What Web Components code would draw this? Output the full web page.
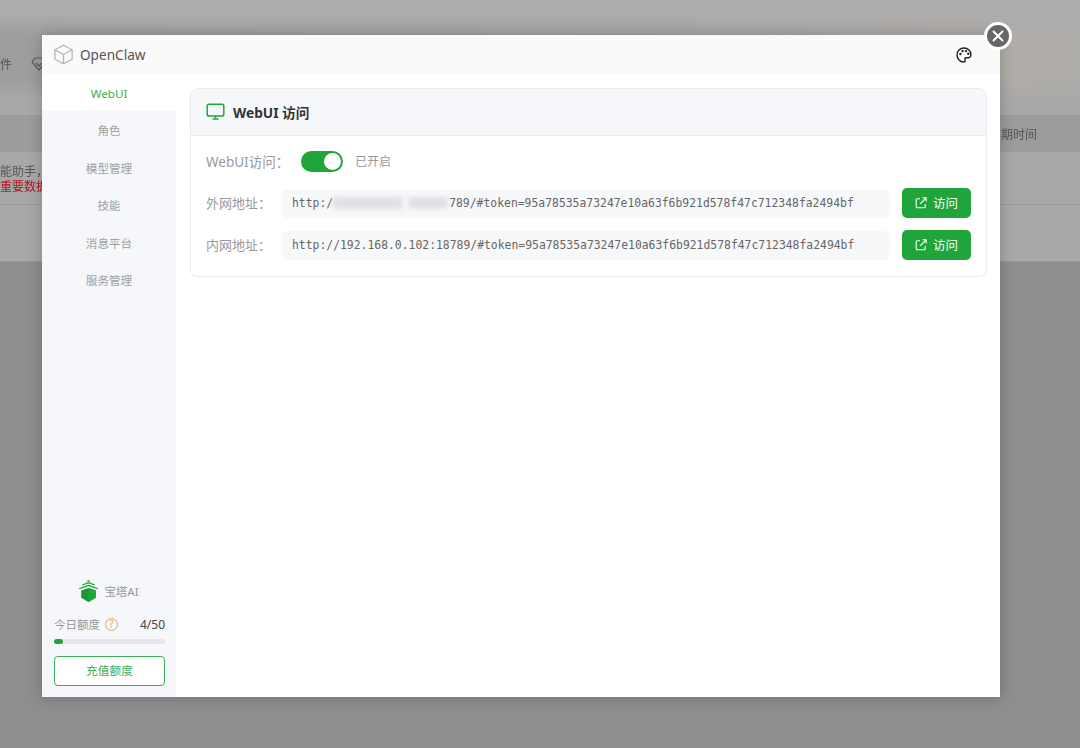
<!DOCTYPE html>
<html lang="zh">
<head>
<meta charset="utf-8">
<title>OpenClaw</title>
<style>
    html, body {
        margin: 0;
        height: 100%;
        overflow: hidden;
        font-family: "Noto Sans", "Noto Sans CJK SC", sans-serif;
    }
</style>
</head>
<body>
<bt-backdrop></bt-backdrop>
<bt-dialog>
    <bt-nav-item active>WebUI</bt-nav-item>
    <bt-nav-item>角色</bt-nav-item>
    <bt-nav-item>模型管理</bt-nav-item>
    <bt-nav-item>技能</bt-nav-item>
    <bt-nav-item>消息平台</bt-nav-item>
    <bt-nav-item>服务管理</bt-nav-item>
    <bt-quota slot="footer" used="4" total="50"></bt-quota>

    <bt-card slot="content" title="WebUI 访问">
        <bt-switch-row label="WebUI访问：" state="已开启"></bt-switch-row>
        <bt-addr-row label="外网地址：" masked head="http:/" tail="789/#token=95a78535a73247e10a63f6b921d578f47c712348fa2494bf"></bt-addr-row>
        <bt-addr-row label="内网地址：" head="http://192.168.0.102:18789/#token=95a78535a73247e10a63f6b921d578f47c712348fa2494bf"></bt-addr-row>
    </bt-card>
</bt-dialog>

<script>
const CJK = `"Noto Sans", "Noto Sans CJK SC", sans-serif`;

// the page behind the dialog, greyed out by the mask
class BtBackdrop extends HTMLElement {
    constructor() {
        super();
        this.attachShadow({mode: 'open'});
        this.shadowRoot.innerHTML = `
<style>
    :host {
        display: flex;
        flex-direction: column;
        height: 748px;
        overflow: hidden;
        background: #8e8e8e;
        font: 12px ${CJK};
        color: #555;
        filter: blur(0.6px);
    }
    .top {
        height: 115px;
        box-sizing: border-box;
        padding-top: 55px;
        display: flex;
        align-items: flex-start;
        gap: 19px;
        background:
            linear-gradient(180deg, #acacac 0, #acacac 14px, rgba(172, 172, 172, 0) 36px),
            linear-gradient(180deg, rgba(168, 168, 168, 0) 78px, #a8a8a8 100px),
            linear-gradient(90deg, #9f9d9b 0%, #a6a4a2 60%, #b2ada9 90%, #aeaca9 100%);
    }
    .top svg { margin-top: 2px; }
    .head {
        height: 37px;
        background: #9c9c9c;
        display: flex;
        justify-content: flex-end;
        align-items: center;
        padding-right: 43px;
    }
    .row {
        height: 53px;
        background: #a8a8a8;
        border-bottom: 1px solid #9a9a9a;
        padding-top: 12px;
        box-sizing: border-box;
        line-height: 15px;
    }
    .row .red { color: #b3141d; }
    .foot {
        height: 56px;
        background: #a8a8a8;
        border-bottom: 1px solid #999;
    }
</style>
<div class="top">
    <span>件</span>
    <svg width="16" height="14" viewBox="0 0 16 14" fill="none" stroke="#5f5a55" stroke-width="1.2">
        <path d="M4 1h8l3 4-7 8-7-8z"/><path d="M5 6l3 3 3-3"/>
    </svg>
</div>
<div class="head"><span>到期时间</span></div>
<div class="row">
    <div>能助手，</div>
    <div class="red">重要数据</div>
</div>
<div class="foot"></div>`;
    }
}

// dialog frame: header, left menu, content, close button
class BtDialog extends HTMLElement {
    constructor() {
        super();
        this.attachShadow({mode: 'open'});
        this.shadowRoot.innerHTML = `
<style>
    :host {
        position: absolute;
        left: 42px;
        top: 35px;
        width: 958px;
        height: 662px;
        display: flex;
        flex-direction: column;
        background: #fff;
        box-shadow: 0 0 14px rgba(0, 0, 0, .22);
        font-family: ${CJK};
    }
    header {
        height: 39px;
        flex: none;
        display: flex;
        align-items: center;
        padding: 0 28px 0 11px;
        background: #fafafa;
        color: #555;
        font-size: 13.6px;
    }
    header .name { margin-left: 6px; flex: 1; }
    .body { flex: 1; display: flex; min-height: 0; }
    aside {
        width: 134px;
        flex: none;
        display: flex;
        flex-direction: column;
        background: #f5f7fa;
    }
    .foot { margin-top: auto; }
    main { flex: 1; padding: 14px 13px 14px 14px; }
    .close {
        position: absolute;
        right: -12px;
        top: -13px;
        width: 28px;
        height: 28px;
        box-sizing: border-box;
        border: 3px solid #fff;
        border-radius: 50%;
        background: #666;
        display: flex;
        align-items: center;
        justify-content: center;
    }
</style>
<header>
    <svg width="21" height="21" viewBox="0 0 21 21" fill="none" stroke="#b5b5b5" stroke-width="1.3" stroke-linejoin="round">
        <path d="M10.5 1.2l8.6 4.6v9.4l-8.6 4.6-8.6-4.6V5.8z"/>
        <path d="M1.9 5.8l8.6 4.7 8.6-4.7M10.5 10.5v9.3"/>
    </svg>
    <span class="name">OpenClaw</span>
    <svg width="16" height="16" viewBox="0 0 16 16">
        <path d="M8 1C4 1 1 4 1 8s3 7 6.6 7c1.3 0 1.7-.8 1.4-1.7-.4-1-.3-2.3 1-2.5 1.2-.2 2.2.2 3.1-.2 1.3-.6 1.9-1.7 1.9-3C15 3.9 12 1 8 1z" fill="#fff" stroke="#222" stroke-width="1.4"/>
        <circle cx="4.4" cy="7" r="1.2" fill="#222"/>
        <circle cx="6.6" cy="4.1" r="1.2" fill="#222"/>
        <circle cx="10" cy="4.1" r="1.2" fill="#222"/>
        <circle cx="12.3" cy="6.8" r="1.2" fill="#222"/>
    </svg>
</header>
<div class="body">
    <aside>
        <slot></slot>
        <div class="foot"><slot name="footer"></slot></div>
    </aside>
    <main><slot name="content"></slot></main>
</div>
<div class="close">
    <svg width="12" height="12" viewBox="0 0 12 12" stroke="#fff" stroke-width="2" stroke-linecap="round">
        <path d="M1.5 1.5l9 9M10.5 1.5l-9 9"/>
    </svg>
</div>`;
    }
}

class BtNavItem extends HTMLElement {
    constructor() {
        super();
        this.attachShadow({mode: 'open'});
        this.shadowRoot.innerHTML = `
<style>
    :host {
        display: block;
        height: 37.4px;
        line-height: 39.5px;
        text-align: center;
        font-size: 11.6px;
        color: #a0a0a0;
    }
    :host([active]) {
        background: #fff;
        color: #3cae55;
    }
</style>
<slot></slot>`;
    }
}

// sidebar bottom block with logo, quota bar and recharge button
class BtQuota extends HTMLElement {
    constructor() {
        super();
        this.attachShadow({mode: 'open'});
        this.shadowRoot.innerHTML = `
<style>
    :host {
        display: flex;
        flex-direction: column;
        padding: 0 11px 11px 12px;
        font-size: 11.5px;
        color: #999;
    }
    .logo {
        display: flex;
        align-items: center;
        justify-content: center;
        gap: 6px;
        height: 22px;
        font-size: 11.5px;
        padding-right: 1px;
    }
    .line {
        display: flex;
        align-items: center;
        margin-top: 14px;
        height: 16px;
    }
    .tip {
        width: 11px;
        height: 11px;
        margin-left: 5px;
        border: 1px solid #e9a55c;
        border-radius: 50%;
        color: #e9a55c;
        font-size: 10px;
        line-height: 11px;
        text-align: center;
    }
    .num { margin-left: auto; color: #444; font-size: 12px; }
    .track {
        height: 5px;
        margin-top: 7px;
        border-radius: 3px;
        background: #e4e6e9;
    }
    .fill {
        height: 100%;
        border-radius: 3px;
        background: #20a53a;
    }
    .btn {
        height: 30px;
        margin-top: 12px;
        box-sizing: border-box;
        border: 1px solid #3cae55;
        border-radius: 4px;
        background: #fff;
        color: #3cae55;
        font-size: 11.7px;
        line-height: 26px;
        text-align: center;
    }
</style>
<div class="logo">
    <svg width="19" height="22" viewBox="0 0 19 22">
        <path d="M9.5 0l2.2 1.4H7.3z" fill="#20a53a"/>
        <path d="M9.5 2L16 4.4v1.2L9.5 3.400 3 5.600V4.400z" fill="#20a53a"/>
        <path d="M9.5 4.800L18.800 8v1.300L9.500 6.300.2 9.300V8z" fill="#20a53a"/>
        <path d="M2.200 10.500L9.500 8l7.300 2.500v7.200L9.500 22l-7.300-4.300z" fill="#1b9634"/>
        <path d="M9.500 8l7.300 2.500v7.200L9.500 22z" fill="#20a53a"/>
    </svg>
    <span>宝塔AI</span>
</div>
<div class="line">
    <span>今日额度</span><span class="tip">?</span>
    <span class="num" id="num"></span>
</div>
<div class="track"><div class="fill" id="fill"></div></div>
<div class="btn">充值额度</div>`;
    }

    connectedCallback() {
        const used = Number(this.getAttribute('used'));
        const total = Number(this.getAttribute('total'));
        this.shadowRoot.getElementById('num').textContent = used + '/' + total;
        this.shadowRoot.getElementById('fill').style.width = (used / total * 100) + '%';
    }
}

class BtCard extends HTMLElement {
    constructor() {
        super();
        this.attachShadow({mode: 'open'});
        this.shadowRoot.innerHTML = `
<style>
    :host {
        display: block;
        box-sizing: border-box;
        border: 1px solid #e8eaee;
        border-radius: 8px;
        overflow: hidden;
        background: #fff;
    }
    .head {
        height: 46px;
        display: flex;
        align-items: center;
        gap: 8px;
        padding-left: 15px;
        background: #f5f7fa;
        border-bottom: 1px solid #e8eaee;
        color: #333;
        font-size: 13.7px;
        font-weight: 700;
    }
    .list {
        display: flex;
        flex-direction: column;
        gap: 12px;
        padding: 15px 15px 16px;
    }
</style>
<div class="head">
    <svg width="19" height="18" viewBox="0 0 19 18" fill="none" stroke="#20a53a" stroke-width="1.5">
        <rect x="1.2" y="1.2" width="16.6" height="11.8" rx="1.8"/>
        <path d="M9.5 13v2.5" />
        <path d="M6.5 16h6" stroke-width="1.6"/>
    </svg>
    <span id="title"></span>
</div>
<div class="list"><slot></slot></div>`;
    }

    connectedCallback() {
        this.shadowRoot.getElementById('title').textContent = this.getAttribute('title');
    }
}

class BtSwitchRow extends HTMLElement {
    constructor() {
        super();
        this.attachShadow({mode: 'open'});
        this.shadowRoot.innerHTML = `
<style>
    :host {
        display: flex;
        align-items: center;
        height: 21px;
        margin-bottom: 4px;
        font-size: 13px;
        color: #999;
    }
    .label { width: 95px; font-size: 13.5px; white-space: nowrap; padding-bottom: 2px; }
    .switch {
        width: 42px;
        height: 21px;
        box-sizing: border-box;
        padding: 2px 2px 2px 23px;
        border-radius: 11px;
        background: #20a53a;
    }
    .knob {
        width: 17px;
        height: 17px;
        border-radius: 50%;
        background: #fff;
    }
    .state { margin-left: 12px; font-size: 12px; padding-bottom: 2px; }
</style>
<span class="label" id="label"></span>
<div class="switch"><div class="knob"></div></div>
<span class="state" id="state"></span>`;
    }

    connectedCallback() {
        this.shadowRoot.getElementById('label').textContent = this.getAttribute('label');
        this.shadowRoot.getElementById('state').textContent = this.getAttribute('state');
    }
}

class BtAddrRow extends HTMLElement {
    constructor() {
        super();
        this.attachShadow({mode: 'open'});
        this.shadowRoot.innerHTML = `
<style>
    :host {
        display: flex;
        align-items: center;
        gap: 12px;
        height: 30px;
        font-size: 13px;
        color: #999;
    }
    .label { width: 63px; white-space: nowrap; padding-bottom: 2px; }
    .field {
        flex: 1;
        height: 29px;
        box-sizing: border-box;
        padding-left: 11px;
        display: flex;
        align-items: center;
        border-radius: 6px;
        background: #f7f8fa;
        font: 11.4px "DejaVu Sans Mono", monospace;
        color: #666;
        white-space: pre;
    }
    .mask {
        display: none;
        width: 116px;
        height: 12px;
        gap: 5px;
        filter: blur(2px);
    }
    :host([masked]) .mask { display: flex; }
    .mask i { display: block; background: #dfe1e4; }
    .mask i:first-child { width: 70px; }
    .mask i:last-child { width: 40px; }
    .go {
        width: 69px;
        height: 30px;
        display: flex;
        align-items: center;
        justify-content: center;
        gap: 6px;
        border-radius: 5px;
        background: #20a53a;
        color: #fff;
        font-size: 12.5px;
    }
    .go span { padding-bottom: 2px; }
</style>
<span class="label" id="label"></span>
<div class="field"><span id="head"></span><span class="mask"><i></i><i></i></span><span id="tail"></span></div>
<div class="go">
    <svg width="12" height="12" viewBox="0 0 12 12" fill="none" stroke="#fff" stroke-width="1.1">
        <path d="M5 1.8H2.2a1 1 0 0 0-1 1v7a1 1 0 0 0 1 1h7a1 1 0 0 0 1-1V7"/>
        <path d="M5.2 6.8L11 1M7.5 .8H11.2V4.5"/>
    </svg>
    <span>访问</span>
</div>`;
    }

    connectedCallback() {
        for (const id of ['label', 'head', 'tail']) {
            this.shadowRoot.getElementById(id).textContent = this.getAttribute(id) || '';
        }
    }
}

customElements.define('bt-backdrop', BtBackdrop);
customElements.define('bt-dialog', BtDialog);
customElements.define('bt-nav-item', BtNavItem);
customElements.define('bt-quota', BtQuota);
customElements.define('bt-card', BtCard);
customElements.define('bt-switch-row', BtSwitchRow);
customElements.define('bt-addr-row', BtAddrRow);
</script>
</body>
</html>
